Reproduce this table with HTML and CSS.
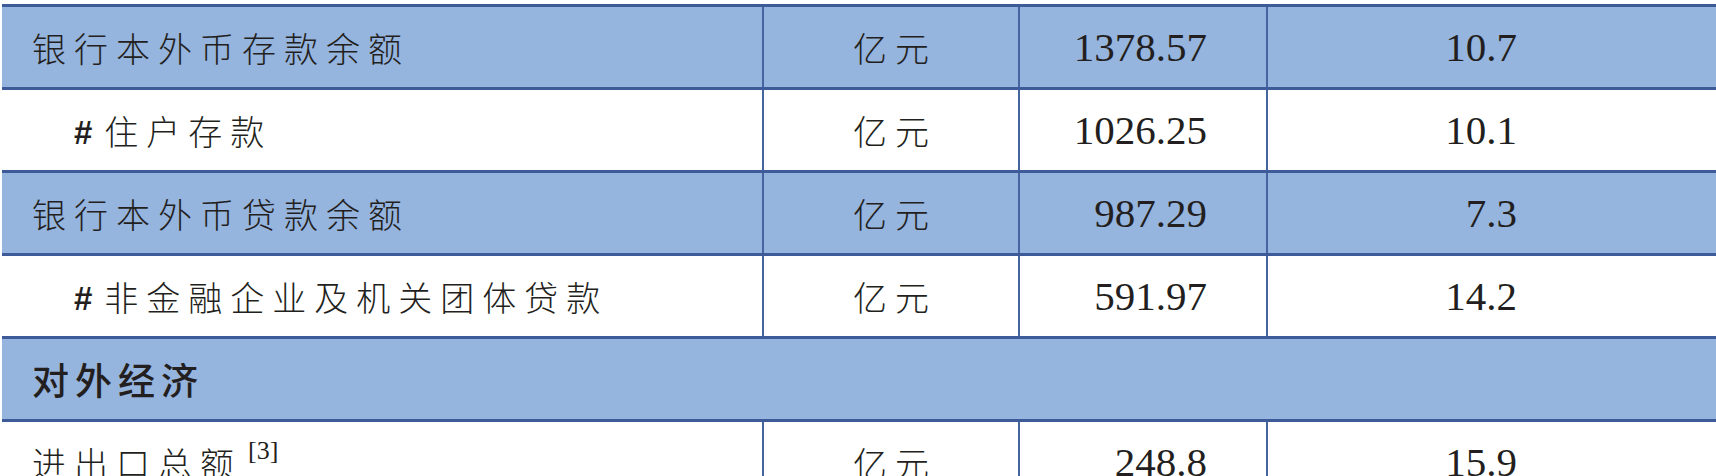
FILE: index.html
```html
<!DOCTYPE html>
<html lang="zh-CN">
<head>
<meta charset="utf-8">
<title>统计表</title>
<link rel="stylesheet" href="styles.css">
</head>
<body>
<div class="frame">
<table class="stats">
  <colgroup>
    <col class="c-name">
    <col class="c-unit">
    <col class="c-val">
    <col class="c-rate">
  </colgroup>
  <tbody>
    <tr class="shade">
      <td class="name">银行本外币存款余额</td>
      <td class="unit">亿元</td>
      <td class="val">1378.57</td>
      <td class="rate">10.7</td>
    </tr>
    <tr>
      <td class="name sub"><span class="hash">#</span>住户存款</td>
      <td class="unit">亿元</td>
      <td class="val">1026.25</td>
      <td class="rate">10.1</td>
    </tr>
    <tr class="shade">
      <td class="name">银行本外币贷款余额</td>
      <td class="unit">亿元</td>
      <td class="val">987.29</td>
      <td class="rate">7.3</td>
    </tr>
    <tr>
      <td class="name sub"><span class="hash">#</span>非金融企业及机关团体贷款</td>
      <td class="unit">亿元</td>
      <td class="val">591.97</td>
      <td class="rate">14.2</td>
    </tr>
    <tr class="shade section">
      <td class="heading" colspan="4">对外经济</td>
    </tr>
    <tr>
      <td class="name">进出口总额<sup class="note">[3]</sup></td>
      <td class="unit">亿元</td>
      <td class="val">248.8</td>
      <td class="rate">15.9</td>
    </tr>
  </tbody>
</table>
</div>
</body>
</html>
```

FILE: styles.css
```css
html, body {
  margin: 0;
  padding: 0;
  background: #ffffff;
  overflow: hidden;
}

.frame {
  padding: 4px 0 0 2px;
  width: 1800px;
}

.stats {
  border-collapse: collapse;
  table-layout: fixed;
  width: 1800px;
  color: #231f20;
}

.c-name { width: 761px; }
.c-unit { width: 256px; }
.c-val  { width: 248px; }
.c-rate { width: 535px; }

.stats tr {
  height: 83px;
}

.stats td {
  border-top: 3px solid #3d5b98;
  border-bottom: 3px solid #3d5b98;
  border-left: 2px solid #4564a0;
  border-right: 2px solid #4564a0;
  padding: 0;
  vertical-align: middle;
  white-space: nowrap;
}

.stats td:first-child {
  border-left: none;
}

.shade td {
  background: #95b4de;
}

.name {
  font-family: "Noto Sans CJK SC", sans-serif;
  font-weight: 300;
  font-size: 34px;
  letter-spacing: 8px;
  padding-left: 30px !important;
}

.name.sub {
  padding-left: 72px !important;
}

.hash {
  font-family: "Liberation Sans", sans-serif;
  font-weight: 700;
  font-size: 33px;
  letter-spacing: 0;
  margin-right: 12px;
  position: relative;
  top: -1px;
}

.note {
  font-family: "Liberation Serif", serif;
  font-size: 26px;
  letter-spacing: 0;
  vertical-align: 18px;
  line-height: 0;
  margin-left: 6px;
}

.unit {
  font-family: "Noto Sans CJK SC", sans-serif;
  font-weight: 300;
  font-size: 34px;
  letter-spacing: 8px;
  text-align: center;
  text-indent: 8px;
}

.val, .rate {
  font-family: "Liberation Serif", serif;
  font-size: 41px;
  text-align: right;
}

.val {
  padding-right: 59px !important;
}

.rate {
  padding-right: 284px !important;
}

.heading {
  font-family: "Noto Sans CJK SC", sans-serif;
  font-weight: 500;
  font-size: 37px;
  letter-spacing: 6px;
  padding-left: 30px !important;
  border-left: none !important;
  border-right: none !important;
}
```
